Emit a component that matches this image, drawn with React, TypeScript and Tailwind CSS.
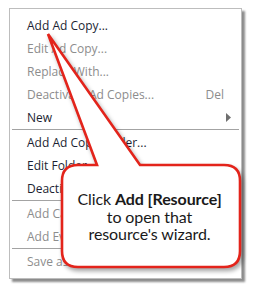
import type { ReactNode } from 'react';

type Item = { label: string; enabled?: boolean; shortcut?: string; submenu?: boolean };

const groups: Item[][] = [
  [
    { label: 'Add Ad Copy...', enabled: true },
    { label: 'Edit Ad Copy...' },
    { label: 'Replace With...' },
    { label: 'Deactivate Ad Copies...', shortcut: 'Del' },
    { label: 'New', enabled: true, submenu: true },
  ],
  [
    { label: 'Add Ad Copy Folder...', enabled: true },
    { label: 'Edit Folder', enabled: true },
    { label: 'Deactivate Folder', enabled: true },
  ],
  [{ label: 'Add Campaign...' }, { label: 'Add Event...' }],
  [{ label: 'Save as...' }],
];

function MenuRow({ item }: { item: Item }) {
  return (
    <div
      className={`flex h-[23px] items-center pl-[17px] pr-[17px] ${
        item.enabled ? 'text-[#1c1f33]' : 'text-[#8d8d8d]'
      }`}
    >
      <span className="flex-1 whitespace-nowrap">{item.label}</span>
      {item.shortcut && <span>{item.shortcut}</span>}
      {item.submenu && (
        <svg width="6" height="9" viewBox="0 0 6 9" className="mr-[-8px]">
          <path d="M0 0 L5 4.5 L0 9 Z" fill="#6f6f6f" />
        </svg>
      )}
    </div>
  );
}

function Callout({ children }: { children: ReactNode }) {
  // rounded box with a pointer going up to the first menu item
  const d =
    'M97 165 L48 34 L140 165 L224 165 Q240 165 240 181 L240 251 Q240 267 224 267 L78 267 Q62 267 62 251 L62 181 Q62 165 78 165 Z';
  return (
    <div className="absolute inset-0">
      <svg width="253" height="292" className="absolute left-0 top-0 drop-shadow-[2px_3px_2px_rgba(0,0,0,0.35)]">
        <path d={d} fill="#fff" stroke="#e3241b" strokeWidth="2.6" strokeLinejoin="miter" />
      </svg>
      <div className="absolute left-[62px] top-[190px] w-[175px] text-center text-[16px] leading-[17.5px] tracking-[-0.1px] text-[#1a1a1a] font-['Lato',sans-serif]">
        {children}
      </div>
    </div>
  );
}

export default function App() {
  return (
    <div className="relative h-[292px] w-[253px] bg-white font-['Open_Sans',sans-serif] text-[12px]">
      <div className="ml-[9px] pt-[8px]">
        <div className="h-[271px] w-[233px] border border-[#bdbdbd] bg-white pb-[4px] pt-[5px] shadow-[3px_3px_2px_rgba(0,0,0,0.45)]">
          {groups.map((g, i) => (
            <div key={i}>
              {i > 0 && <div className="mx-[2px] mb-px h-px bg-[#a3a3a3]" />}
              {g.map((item) => (
                <MenuRow key={item.label} item={item} />
              ))}
            </div>
          ))}
        </div>
      </div>

      <Callout>
        Click <b>Add [Resource]</b>
        <br />
        to open that
        <br />
        resource's wizard.
      </Callout>
    </div>
  );
}
